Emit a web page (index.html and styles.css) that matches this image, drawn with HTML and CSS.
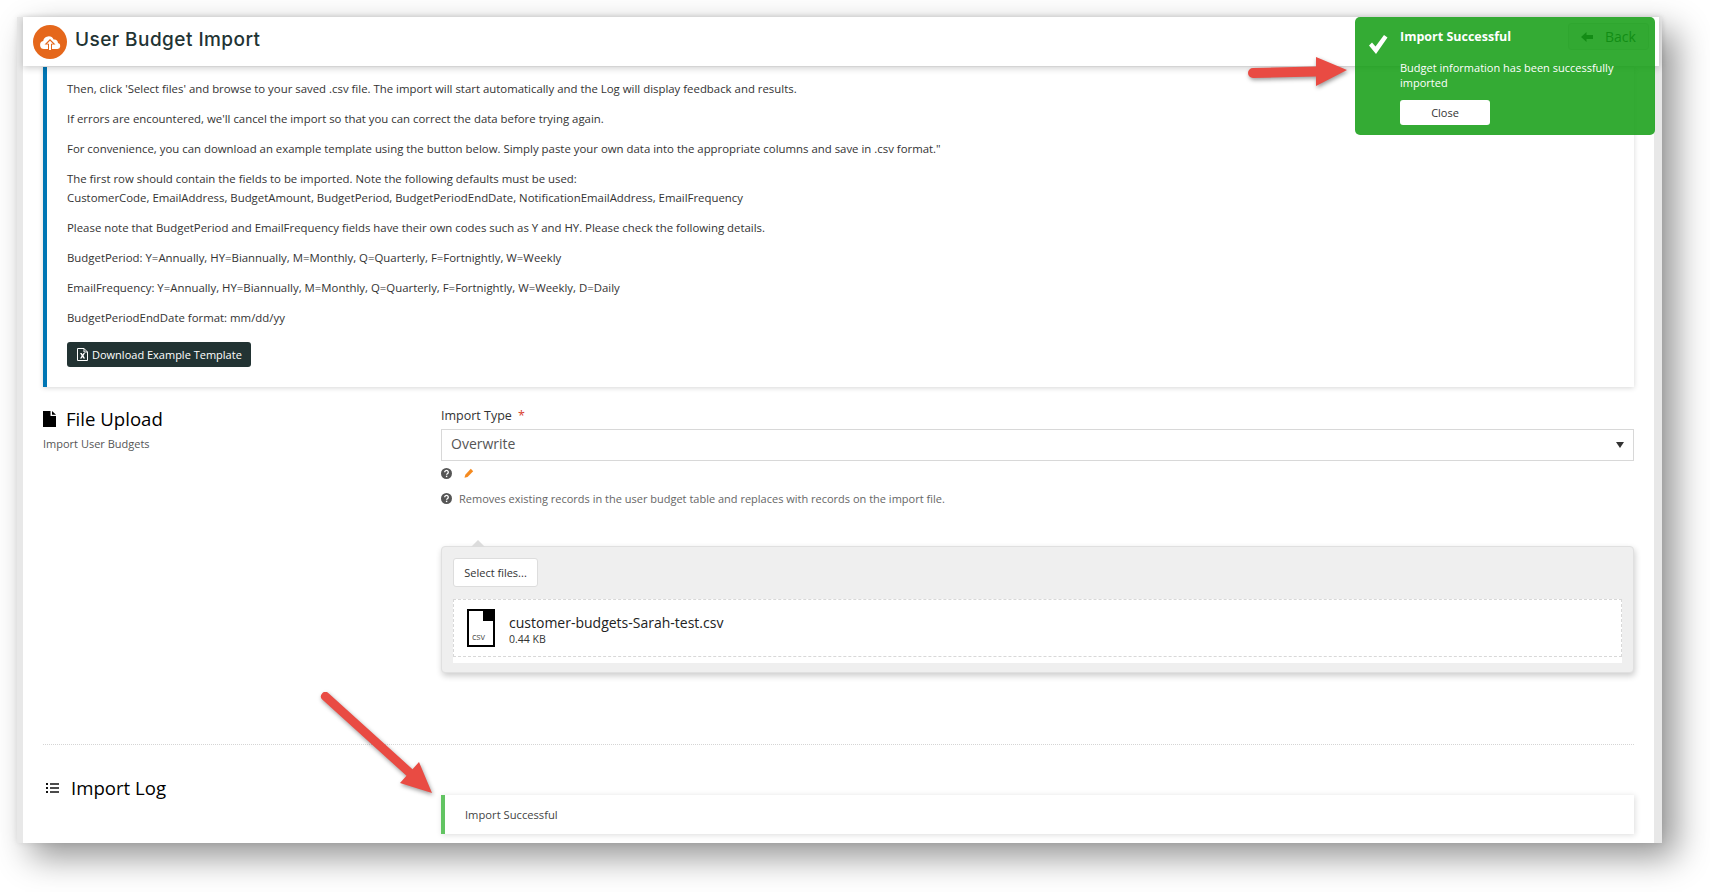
FILE: index.html
```html
<!DOCTYPE html>
<html lang="en">
<head>
<meta charset="utf-8">
<title>User Budget Import</title>
<link rel="stylesheet" href="styles.css">
</head>
<body>
<div class="shot">
  <div class="app">
    <header class="topbar">
      <span class="logo">
        <svg width="34" height="34" viewBox="0 0 34 34"><circle cx="17" cy="17" r="17" fill="#e5671b"/><path d="M11 24a4 4 0 0 1-.8-7.900 5.500 5.500 0 0 1 10.400-1.600 4 4 0 0 1 4.400 3.600 3 3 0 0 1-.5 5.900z" fill="#fff"/><path d="M17 14l-5.500 5.500H15V25h4v-5.500h3.500z" fill="#e5671b"/><path d="M17 15.800l-3 3h2V25h2v-6.200h2z" fill="#fff"/></svg>
      </span>
      <h1 class="title">User Budget Import</h1>
      <button class="back"><svg width="12" height="10" viewBox="0 0 12 10"><path d="M5.5 0v3H12v4H5.500v3L0 5z" fill="#223333"/></svg><span>Back</span></button>
    </header>
    <main class="content">
      <section class="info">
        <p>Then, click 'Select files' and browse to your saved .csv file. The import will start automatically and the Log will display feedback and results.</p>
        <p>If errors are encountered, we'll cancel the import so that you can correct the data before trying again.</p>
        <p>For convenience, you can download an example template using the button below. Simply paste your own data into the appropriate columns and save in .csv format."</p>
        <p>The first row should contain the fields to be imported. Note the following defaults must be used:<br>CustomerCode, EmailAddress, BudgetAmount, BudgetPeriod, BudgetPeriodEndDate, NotificationEmailAddress, EmailFrequency</p>
        <p>Please note that BudgetPeriod and EmailFrequency fields have their own codes such as Y and HY. Please check the following details.</p>
        <p>BudgetPeriod: Y=Annually, HY=Biannually, M=Monthly, Q=Quarterly, F=Fortnightly, W=Weekly</p>
        <p>EmailFrequency: Y=Annually, HY=Biannually, M=Monthly, Q=Quarterly, F=Fortnightly, W=Weekly, D=Daily</p>
        <p>BudgetPeriodEndDate format: mm/dd/yy</p>
        <button class="download">
          <svg width="11" height="13" viewBox="0 0 11 13"><path d="M.5.500h6.500l3.500 3.500v8.500h-10z" fill="none" stroke="#fff"/><path d="M7 .5v3.500h3.500" fill="none" stroke="#fff"/><path d="M3 5h1.700l.9 1.600.9-1.600h1.500L6.500 7.700 8.100 10.500H6.400L5.500 8.900 4.600 10.500H3l1.600-2.800z" fill="#fff"/></svg>
          <span>Download Example Template</span>
        </button>
      </section>

      <section class="row upload-row">
        <div class="side">
          <h2 class="heading"><svg class="heading-file" width="13" height="16" viewBox="0 0 13 16"><path d="M0 0h7.500v5H13v11H0z M9 0l4 3.800H9z" fill="#000"/></svg><span>File Upload</span></h2>
          <p class="sub">Import User Budgets</p>
        </div>
        <div class="fields">
          <label class="label">Import Type <span class="req">*</span></label>
          <div class="select"><span>Overwrite</span><i class="caret"></i></div>
          <div class="hints">
            <svg class="q" width="11" height="11" viewBox="0 0 11 11"><circle cx="5.500" cy="5.500" r="5.500" fill="#555"/><path d="M3.700 4.200a1.800 1.700 0 1 1 2.900 1.300c-.7.500-1 .7-1 1.300" fill="none" stroke="#fff" stroke-width="1.300"/><rect x="4.900" y="7.700" width="1.400" height="1.400" fill="#fff"/></svg>
            <svg width="10" height="10" viewBox="0 0 10 10"><path d="M6.800.8l2.400 2.400-5.700 5.700-3 .9.800-3.100z" fill="#f58a1f"/></svg>
          </div>
          <p class="desc">
            <svg class="q" width="11" height="11" viewBox="0 0 11 11"><circle cx="5.500" cy="5.500" r="5.500" fill="#555"/><path d="M3.700 4.200a1.800 1.700 0 1 1 2.900 1.300c-.7.500-1 .7-1 1.300" fill="none" stroke="#fff" stroke-width="1.300"/><rect x="4.900" y="7.700" width="1.400" height="1.400" fill="#fff"/></svg>
            <span>Removes existing records in the user budget table and replaces with records on the import file.</span>
          </p>
          <div class="upload">
            <button class="pick">Select files...</button>
            <div class="files">
              <div class="file">
                <span class="file-icon"><span class="corner"></span><span class="ext">csv</span></span>
                <div class="file-meta">
                  <span class="file-name">customer-budgets-Sarah-test.csv</span>
                  <span class="file-size">0.44 KB</span>
                </div>
              </div>
            </div>
          </div>
        </div>
      </section>

      <hr class="divider">

      <section class="row log-row">
        <h2 class="heading"><svg class="heading-list" width="13" height="10" viewBox="0 0 13 10"><path d="M0 0h2v2H0zM0 4h2v2H0zM0 8h2v2H0zM4 .2h9v1.500H4zM4 4.200h9v1.500H4zM4 8.200h9v1.500H4z" fill="#111"/></svg><span>Import Log</span></h2>
        <div class="log">Import Successful</div>
      </section>
    </main>
  </div>

  <aside class="toast">
    <svg class="tick" width="20" height="19" viewBox="0 0 20 19"><path d="M1 10.500l3-3 3.500 4L16 0l3.500 2.500L8 19z" fill="#fff"/></svg>
    <div class="toast-body">
      <strong class="toast-title">Import Successful</strong>
      <p class="toast-text">Budget information has been successfully imported</p>
      <button class="close">Close</button>
    </div>
  </aside>

  <svg class="arrow arrow-right" width="112" height="48" viewBox="0 0 112 48"><path d="M8 19l63-1.500V8l31 13-31 16V27.500L8 29a5 5 0 0 1 0-10z" fill="#e94b43"/></svg>
  <svg class="arrow arrow-down" width="130" height="115" viewBox="0 0 130 115"><path d="M9 .7l84.500 76.500 6.500-7.200 13 31-32-10 6.500-7.200L3 7.300A4.500 4.500 0 0 1 9 .7z" fill="#e94b43"/></svg>
</div>
</body>
</html>
```
FILE: styles.css
```css
* { box-sizing: border-box; }
html, body { margin: 0; padding: 0; background: #fff; overflow: hidden; }
body { width: 1710px; height: 892px; font-family: "Open Sans", "Liberation Sans", sans-serif; color: #333; }
p, h1, h2 { margin: 0; }
button { font-family: inherit; cursor: pointer; }

.shot {
  position: relative;
  width: 1645px;
  height: 826px;
  margin: 17px 0 0 17px;
  padding-left: 6px;
  background: #e8e8e8;
  box-shadow: 14px 14px 32px rgba(0, 0, 0, .42), 0 0 6px rgba(0, 0, 0, .08);
}
.app {
  width: 1631px;
  height: 826px;
  background: #fff;
  display: flex;
  flex-direction: column;
}
.topbar {
  position: relative;
  z-index: 1;
  flex: none;
  width: 1636px;
  height: 49px;
  display: flex;
  align-items: center;
  padding: 0 10px 0 10px;
  background: #fff;
  box-shadow: 0 2px 7px rgba(0, 0, 0, .2);
}
.logo { display: flex; width: 34px; height: 34px; margin-right: 8px; }
.title { flex: 1; margin-bottom: 4px; font: 500 19px/1 Inter, "Open Sans", sans-serif; letter-spacing: .45px; color: #223333; }
.back {
  display: flex;
  align-items: center;
  align-self: flex-start;
  gap: 12px;
  width: 81px;
  height: 27px;
  margin-top: 6px;
  padding: 0 0 0 12px;
  border: 1px solid #ddd;
  border-radius: 3px;
  background: #eee;
  font-size: 14px;
  color: #223333;
}

.content { flex: 1; padding: 1px 20px 0; }

.info {
  height: 320px;
  padding: 12px 20px 0 20px;
  border-left: 4px solid #0076b4;
  background: #fff;
  box-shadow: 0 1px 5px rgba(0, 0, 0, .16);
  font-size: 11.4px;
  line-height: 19px;
  color: #333;
}
.info p { margin-bottom: 11px; }
.download {
  display: flex;
  align-items: center;
  gap: 4px;
  height: 25px;
  margin-top: 15px;
  padding: 0 9px 0 10px;
  border: 0;
  border-radius: 3px;
  background: #223333;
  color: #fff;
  font-size: 11px;
}

.row { display: grid; grid-template-columns: 398px 1fr; }
.upload-row { padding-top: 20px; }
.heading { display: flex; align-items: center; align-self: start; font-size: 18.6px; font-weight: 500; line-height: 24px; color: #000; }
.heading-file { margin-right: 10px; }
.heading-list { margin: 0 12px 0 3px; }
.sub { margin-top: 5px; font-size: 11px; line-height: 16px; color: #555; }
.label { display: block; height: 22px; font-size: 12.500px; font-weight: 500; line-height: 18px; color: #333; }
.req { margin-left: 3px; color: #d9402f; font-weight: 400; }
.select {
  display: flex;
  align-items: center;
  justify-content: space-between;
  height: 32px;
  padding: 0 9px 3px;
  border: 1px solid #d8d8d8;
  font-size: 14px;
  color: #555;
}
.caret { width: 0; height: 0; margin-top: 3px; border: 4px solid transparent; border-top: 6px solid #333; border-bottom: 0; }
.hints { display: flex; align-items: center; gap: 12px; height: 24px; }
.q { flex: none; }
.desc { display: flex; align-items: center; gap: 7px; height: 24px; margin-top: 1px; font-size: 11px; color: #666; }

.upload {
  position: relative;
  height: 127px;
  margin-top: 36px;
  padding: 11px 11px 10px;
  border: 1px solid #e0e0e0;
  border-radius: 4px;
  background: #efefef;
  box-shadow: 1px 3px 6px rgba(0, 0, 0, .2);
}
.upload::before {
  content: "";
  position: absolute;
  top: -7px;
  left: 29px;
  border: 7px solid transparent;
  border-top: 0;
  border-bottom: 7px solid #dcdcdc;
}
.pick {
  display: block;
  width: 85px;
  height: 29px;
  padding: 0;
  border: 1px solid #ddd;
  border-radius: 3px;
  background: #fff;
  font-size: 11px;
  color: #333;
}
.files { height: 64px; margin-top: 12px; padding-bottom: 6px; background: #fff; }
.file {
  display: flex;
  align-items: center;
  gap: 14px;
  height: 58px;
  padding-left: 13px;
  border: 1px dashed #d8d8d8;
}
.file-icon { position: relative; flex: none; width: 28px; height: 38px; border: 2px solid #000; background: #fff; }
.corner { position: absolute; top: -1px; right: -1px; width: 11px; height: 11px; background: #000; }
.ext { position: absolute; left: 3px; bottom: 3px; font-size: 9px; line-height: 10px; color: #555; }
.file-meta { display: flex; flex-direction: column; padding-top: 3px; }
.file-name { font-size: 14px; line-height: 18px; color: #222; }
.file-size { font-size: 10.500px; line-height: 14px; color: #333; }

.divider { margin: 71px 0 0; border: 0; border-top: 1px dotted #d5d5d5; }
.log-row { padding-top: 31px; }
.log {
  height: 39px;
  margin-top: 19px;
  padding-left: 20px;
  border-left: 4px solid #62c462;
  background: #fff;
  box-shadow: 1px 1px 6px rgba(0, 0, 0, .14);
  font-size: 11.2px;
  line-height: 39px;
  color: #444;
}

.toast {
  position: absolute;
  z-index: 2;
  top: 0;
  left: 1338px;
  display: flex;
  width: 300px;
  height: 118px;
  padding: 10px 12px 0 13px;
  border-radius: 5px;
  background: rgba(17, 156, 17, .85);
  color: #fff;
}
.tick { flex: none; margin: 8px 12px 0 0; }
.toast-title { display: block; font-size: 12.500px; font-weight: 700; line-height: 20px; }
.toast-text { margin-top: 13px; font-size: 11px; line-height: 15px; }
.close {
  display: block;
  width: 90px;
  height: 25px;
  margin-top: 10px;
  padding: 0;
  border: 0;
  border-radius: 3px;
  background: #fff;
  color: #333;
  font-size: 11px;
}

.arrow { position: absolute; z-index: 3; filter: drop-shadow(1px 2px 2px rgba(0, 0, 0, .4)); }
.arrow-right { top: 32px; left: 1228px; }
.arrow-down { top: 675px; left: 302px; }
```
